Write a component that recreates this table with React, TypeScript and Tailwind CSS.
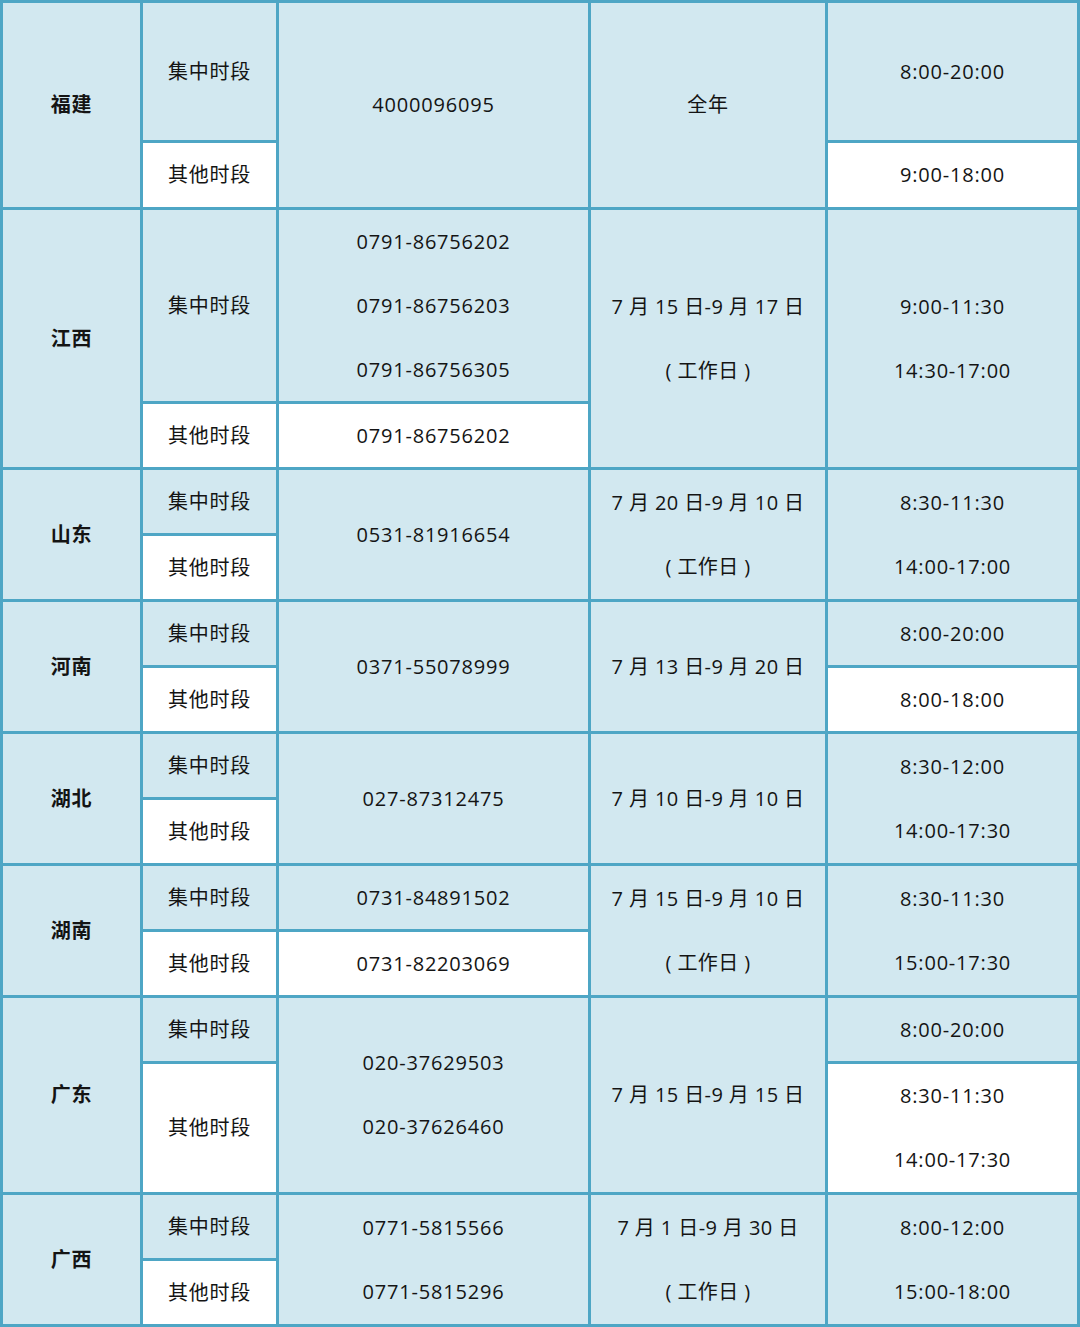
import React from 'react';

type Cell = {
    col: number;
    row: number;
    span?: number;
    lines: string[];
    white?: boolean;
    bold?: boolean;
    date?: boolean;
};

// row tracks: every province has two sub-rows (集中时段 / 其他时段)
const rowTracks = 'grid-rows-[137px_64px_191px_63px_63px_63px_63px_63px_63px_63px_63px_63px_63px_128px_63px_63px]';

const workday = '( 工作日 )';

const cells: Cell[] = [
    // 福建
    { col: 1, row: 1, span: 2, lines: ['福建'], bold: true },
    { col: 2, row: 1, lines: ['集中时段'] },
    { col: 2, row: 2, lines: ['其他时段'], white: true },
    { col: 3, row: 1, span: 2, lines: ['4000096095'] },
    { col: 4, row: 1, span: 2, lines: ['全年'] },
    { col: 5, row: 1, lines: ['8:00-20:00'] },
    { col: 5, row: 2, lines: ['9:00-18:00'], white: true },
    // 江西
    { col: 1, row: 3, span: 2, lines: ['江西'], bold: true },
    { col: 2, row: 3, lines: ['集中时段'] },
    { col: 2, row: 4, lines: ['其他时段'], white: true },
    { col: 3, row: 3, lines: ['0791-86756202', '0791-86756203', '0791-86756305'] },
    { col: 3, row: 4, lines: ['0791-86756202'], white: true },
    { col: 4, row: 3, span: 2, lines: ['7 月 15 日-9 月 17 日', workday], date: true },
    { col: 5, row: 3, span: 2, lines: ['9:00-11:30', '14:30-17:00'] },
    // 山东
    { col: 1, row: 5, span: 2, lines: ['山东'], bold: true },
    { col: 2, row: 5, lines: ['集中时段'] },
    { col: 2, row: 6, lines: ['其他时段'], white: true },
    { col: 3, row: 5, span: 2, lines: ['0531-81916654'] },
    { col: 4, row: 5, span: 2, lines: ['7 月 20 日-9 月 10 日', workday], date: true },
    { col: 5, row: 5, span: 2, lines: ['8:30-11:30', '14:00-17:00'] },
    // 河南
    { col: 1, row: 7, span: 2, lines: ['河南'], bold: true },
    { col: 2, row: 7, lines: ['集中时段'] },
    { col: 2, row: 8, lines: ['其他时段'], white: true },
    { col: 3, row: 7, span: 2, lines: ['0371-55078999'] },
    { col: 4, row: 7, span: 2, lines: ['7 月 13 日-9 月 20 日'], date: true },
    { col: 5, row: 7, lines: ['8:00-20:00'] },
    { col: 5, row: 8, lines: ['8:00-18:00'], white: true },
    // 湖北
    { col: 1, row: 9, span: 2, lines: ['湖北'], bold: true },
    { col: 2, row: 9, lines: ['集中时段'] },
    { col: 2, row: 10, lines: ['其他时段'], white: true },
    { col: 3, row: 9, span: 2, lines: ['027-87312475'] },
    { col: 4, row: 9, span: 2, lines: ['7 月 10 日-9 月 10 日'], date: true },
    { col: 5, row: 9, span: 2, lines: ['8:30-12:00', '14:00-17:30'] },
    // 湖南
    { col: 1, row: 11, span: 2, lines: ['湖南'], bold: true },
    { col: 2, row: 11, lines: ['集中时段'] },
    { col: 2, row: 12, lines: ['其他时段'], white: true },
    { col: 3, row: 11, lines: ['0731-84891502'] },
    { col: 3, row: 12, lines: ['0731-82203069'], white: true },
    { col: 4, row: 11, span: 2, lines: ['7 月 15 日-9 月 10 日', workday], date: true },
    { col: 5, row: 11, span: 2, lines: ['8:30-11:30', '15:00-17:30'] },
    // 广东
    { col: 1, row: 13, span: 2, lines: ['广东'], bold: true },
    { col: 2, row: 13, lines: ['集中时段'] },
    { col: 2, row: 14, lines: ['其他时段'], white: true },
    { col: 3, row: 13, span: 2, lines: ['020-37629503', '020-37626460'] },
    { col: 4, row: 13, span: 2, lines: ['7 月 15 日-9 月 15 日'], date: true },
    { col: 5, row: 13, lines: ['8:00-20:00'] },
    { col: 5, row: 14, lines: ['8:30-11:30', '14:00-17:30'], white: true },
    // 广西
    { col: 1, row: 15, span: 2, lines: ['广西'], bold: true },
    { col: 2, row: 15, lines: ['集中时段'] },
    { col: 2, row: 16, lines: ['其他时段'], white: true },
    { col: 3, row: 15, span: 2, lines: ['0771-5815566', '0771-5815296'] },
    { col: 4, row: 15, span: 2, lines: ['7 月 1 日-9 月 30 日', workday], date: true },
    { col: 5, row: 15, span: 2, lines: ['8:00-12:00', '15:00-18:00'] },
];

const colClass: Record<number, string> = {
    1: 'col-start-1',
    2: 'col-start-2',
    3: 'col-start-3',
    4: 'col-start-4',
    5: 'col-start-5',
};

const rowClass: Record<number, string> = {
    1: 'row-start-1', 2: 'row-start-2', 3: 'row-start-3', 4: 'row-start-4',
    5: 'row-start-5', 6: 'row-start-6', 7: 'row-start-7', 8: 'row-start-8',
    9: 'row-start-9', 10: 'row-start-10', 11: 'row-start-11', 12: 'row-start-12',
    13: 'row-start-13', 14: 'row-start-14', 15: 'row-start-15', 16: 'row-start-16',
};

export default function App() {
    return (
        <div
            className={`w-[1080px] h-[1327px] grid grid-cols-[137px_133px_309px_234px_249px] ${rowTracks} gap-[3px] p-[3px] bg-[#4ea6c5] text-[20px] text-[#141414]`}
            style={{ fontFamily: '"Open Sans", "Noto Sans CJK SC", sans-serif' }}
        >
            {cells.map((c, i) => (
                <div
                    key={i}
                    className={`${colClass[c.col]} ${rowClass[c.row]} ${c.span === 2 ? 'row-span-2' : 'row-span-1'} flex flex-col items-center justify-center leading-[64px] ${c.date ? 'tracking-[0.4px]' : 'tracking-[0.8px]'} ${c.white ? 'bg-white' : 'bg-[#d2e8f0]'} ${c.bold ? 'font-bold' : ''}`}
                >
                    {c.lines.map((l, j) => (
                        <span key={j} className="whitespace-pre">{l}</span>
                    ))}
                </div>
            ))}
        </div>
    );
}
